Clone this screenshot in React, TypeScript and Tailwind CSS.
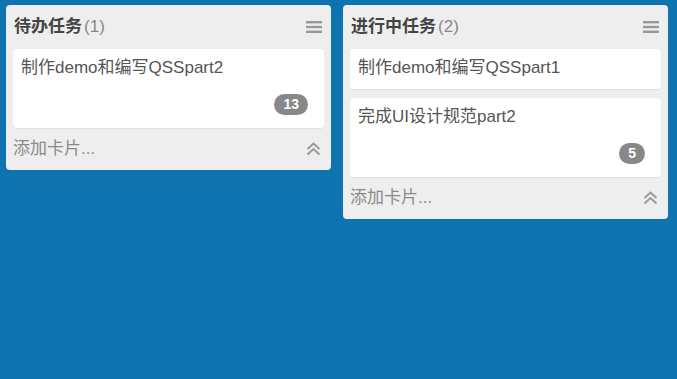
import React from "react";

type Card = { title: string; count?: number };

const lists: { name: string; cards: Card[] }[] = [
  { name: "待办任务", cards: [{ title: "制作demo和编写QSSpart2", count: 13 }] },
  {
    name: "进行中任务",
    cards: [
      { title: "制作demo和编写QSSpart1" },
      { title: "完成UI设计规范part2", count: 5 },
    ],
  },
];

function MenuIcon() {
  return (
    <svg width="16" height="14" viewBox="0 0 16 14" className="text-[#999]">
      <rect x="0" y="1" width="16" height="2.4" fill="currentColor" />
      <rect x="0" y="5.8" width="16" height="2.4" fill="currentColor" />
      <rect x="0" y="10.6" width="16" height="2.4" fill="currentColor" />
    </svg>
  );
}

function ChevronsUp() {
  return (
    <svg width="15" height="14" viewBox="0 0 15 14" fill="none" stroke="#9a9a9a" strokeWidth="2">
      <path d="M1.5 7 L7.5 1.5 L13.5 7" />
      <path d="M1.5 12.5 L7.5 7 L13.5 12.5" />
    </svg>
  );
}

function TaskCard({ card }: { card: Card }) {
  return (
    <div className="rounded-[4px] bg-white px-[8px] pt-[8px] pb-[10px] shadow-[0_1px_0_rgba(0,0,0,0.06)]">
      <p className="text-[17px] leading-[22px] text-[#555]">{card.title}</p>
      {card.count !== undefined && (
        <div className="mt-[15px] mb-[3px] flex justify-end pr-[8px]">
          <span className="flex h-[21px] min-w-[25px] items-center justify-center rounded-full bg-[#888] px-[9px] text-[14px] font-bold text-white">
            {card.count}
          </span>
        </div>
      )}
    </div>
  );
}

export default function App() {
  return (
    <div
      className="flex h-[379px] w-[677px] items-start gap-[12px] bg-[#0e73af] pl-[6px] pt-[5px]"
      style={{ fontFamily: '"Liberation Sans", "Noto Sans CJK SC", sans-serif' }}
    >
      {lists.map((list) => (
        <div key={list.name} className="w-[325px] rounded-[4px] bg-[#eeeeee]">
          <div className="flex h-[44px] items-center justify-between pl-[8px] pr-[9px]">
            <h2 className="text-[17px] font-bold text-[#444]">
              {list.name}
              <span className="ml-[2px] font-normal text-[#888]">({list.cards.length})</span>
            </h2>
            <MenuIcon />
          </div>
          <div className="flex flex-col gap-[9px] px-[7px]">
            {list.cards.map((card) => (
              <TaskCard key={card.title} card={card} />
            ))}
          </div>
          <div className="flex h-[42px] items-center justify-between pl-[7px] pr-[10px]">
            <span className="text-[17px] text-[#8a8a8a]">添加卡片...</span>
            <ChevronsUp />
          </div>
        </div>
      ))}
    </div>
  );
}
